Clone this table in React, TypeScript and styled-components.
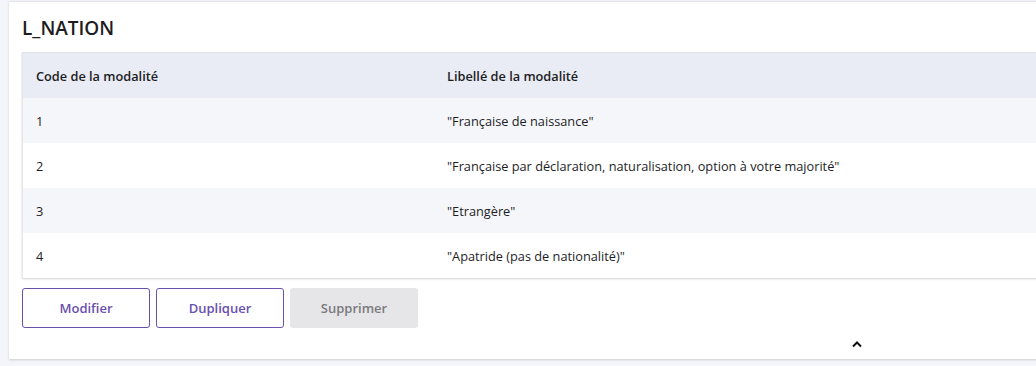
import styled, { createGlobalStyle } from 'styled-components'

const GlobalStyle = createGlobalStyle`
  body {
    margin: 0;
    background-color: #f4f5fa;
    font-family: "Open Sans", "Noto Sans", sans-serif;
    color: #1d1d1f;
    overflow: hidden;
  }
`

const Page = styled.div`
  padding: 1px 0 0 9px;
  width: 1036px;
  height: 366px;
  box-sizing: border-box;
`

const Card = styled.div`
  background-color: #ffffff;
  border-top: 1px solid #e4e4ea;
  box-shadow: 0 1px 2px rgba(0, 0, 0, 0.16);
  padding: 14px 0 0 13px;
  height: 358px;
  box-sizing: border-box;
  width: 1040px;
`

const Title = styled.h2`
  margin: 0 0 12px;
  font-size: 19px;
  font-weight: 600;
  line-height: 24px;
`

const Table = styled.div`
  border-left: 1px solid #e6e6ea;
  box-shadow: 0 1px 2px rgba(0, 0, 0, 0.18);
`

const Row = styled.div<{ $bg: string; $head?: boolean }>`
  display: grid;
  grid-template-columns: 411px 1fr;
  box-sizing: border-box;
  height: ${p => (p.$head ? 46 : 45)}px;
  align-items: center;
  background-color: ${p => p.$bg};
  font-size: 12.75px;
  font-weight: ${p => (p.$head ? 600 : 400)};
  border-top: ${p => (p.$head ? '1px solid #e2e4ea' : 'none')};
`

const Cell = styled.div`
  padding-left: 13px;
  white-space: nowrap;
`

const Actions = styled.div`
  display: flex;
  gap: 6px;
  margin-top: 10px;
`

const Button = styled.button<{ $disabled?: boolean }>`
  width: 128px;
  height: 40px;
  border-radius: 3px;
  font-family: inherit;
  font-size: 13px;
  font-weight: 600;
  cursor: pointer;
  border: 1px solid ${p => (p.$disabled ? '#e6e6e8' : '#6a4fb0')};
  background-color: ${p => (p.$disabled ? '#e6e6e8' : '#ffffff')};
  color: ${p => (p.$disabled ? '#7a7a7e' : '#6a4fb0')};
`

const Footer = styled.div`
  display: flex;
  padding: 12px 0 0 829px;
`

const rows = [
  ['1', '"Française de naissance"'],
  ['2', '"Française par déclaration, naturalisation, option à votre majorité"'],
  ['3', '"Etrangère"'],
  ['4', '"Apatride (pas de nationalité)"'],
]

export default function App() {
  return (
    <>
      <GlobalStyle />
      <Page>
        <Card>
          <Title>L_NATION</Title>
          <Table>
            <Row $bg="#e9ecf4" $head>
              <Cell>Code de la modalité</Cell>
              <Cell>Libellé de la modalité</Cell>
            </Row>
            {rows.map(([code, label], i) => (
              <Row key={code} $bg={i % 2 === 0 ? '#f5f6fa' : '#ffffff'}>
                <Cell>{code}</Cell>
                <Cell>{label}</Cell>
              </Row>
            ))}
          </Table>
          <Actions>
            <Button>Modifier</Button>
            <Button>Dupliquer</Button>
            <Button $disabled>Supprimer</Button>
          </Actions>
          <Footer>
            <svg width="12" height="8" viewBox="0 0 12 8">
              <path d="M2 6.5 L6 2.5 L10 6.5" fill="none" stroke="#111" strokeWidth="2" />
            </svg>
          </Footer>
        </Card>
      </Page>
    </>
  )
}
